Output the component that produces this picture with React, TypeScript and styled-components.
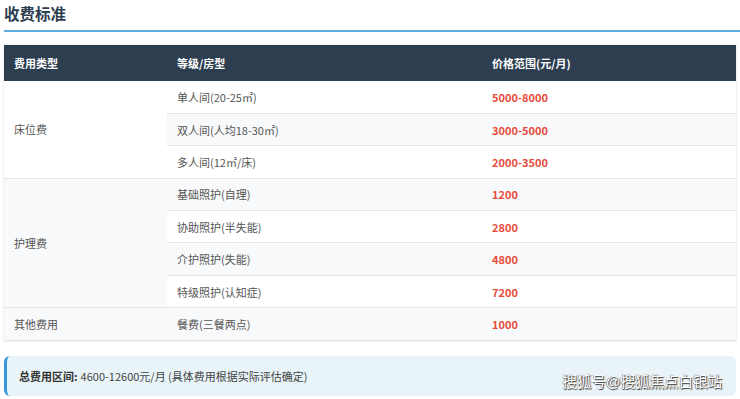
import styled, { createGlobalStyle } from 'styled-components';

const GlobalStyle = createGlobalStyle`
  html, body {
    margin: 0;
    padding: 0;
    background: #ffffff;
  }
  body {
    font-family: "Noto Sans CJK SC", "Noto Sans", sans-serif;
    color: #333333;
  }
`;

const Page = styled.div`
  position: relative;
  width: 740px;
  height: 399px;
  padding: 0 4px;
  box-sizing: border-box;
  overflow: hidden;
`;

const Title = styled.h2`
  margin: 0;
  padding: 3px 0 7px;
  font-size: 15.5px;
  line-height: 20px;
  font-weight: 700;
  color: #2c3e50;
  border-bottom: 2px solid #5dade2;
  margin-right: -4px;
`;

const Table = styled.table`
  width: 732px;
  margin-top: 13px;
  border-collapse: collapse;
  table-layout: fixed;
  font-size: 11px;
  box-shadow: 0 0 2px rgba(0, 0, 0, 0.15);
`;

const HeadCell = styled.th<{ $w: number }>`
  width: ${p => p.$w}px;
  height: 36px;
  padding: 0 10px;
  box-sizing: border-box;
  background: #2c3e50;
  color: #ffffff;
  font-weight: 700;
  text-align: left;
`;

const Row = styled.tr<{ $alt?: boolean }>`
  height: 32.4px;
  background: ${p => (p.$alt ? '#f8f9fa' : '#ffffff')};
`;

const Cell = styled.td<{ $price?: boolean }>`
  padding: 0 10px;
  border-bottom: 1px solid #e6e6e6;
  color: ${p => (p.$price ? '#e74c3c' : '#555555')};
  font-weight: ${p => (p.$price ? 700 : 400)};
  vertical-align: middle;
`;

const Note = styled.div`
  margin-top: 15px;
  height: 40px;
  display: flex;
  align-items: center;
  padding-left: 12px;
  background: #e8f4f8;
  border-left: 3px solid #3498db;
  border-radius: 6px;
  font-size: 11px;
  color: #444444;

  strong {
    color: #333333;
    margin-right: 3px;
  }
`;

const Watermark = styled.div`
  position: absolute;
  right: 18px;
  bottom: 8px;
  font-family: "Liberation Sans", "Noto Sans CJK SC", sans-serif;
  font-size: 14.5px;
  color: #ffffff;
  text-shadow: 1px 1px 1px #333333, -0.5px -0.5px 0.5px #666666;
`;

type Item = { name: string; price: string };
type Group = { type: string; items: Item[] };

const groups: Group[] = [
  {
    type: '床位费',
    items: [
      { name: '单人间(20-25㎡)', price: '5000-8000' },
      { name: '双人间(人均18-30㎡)', price: '3000-5000' },
      { name: '多人间(12㎡/床)', price: '2000-3500' },
    ],
  },
  {
    type: '护理费',
    items: [
      { name: '基础照护(自理)', price: '1200' },
      { name: '协助照护(半失能)', price: '2800' },
      { name: '介护照护(失能)', price: '4800' },
      { name: '特级照护(认知症)', price: '7200' },
    ],
  },
  {
    type: '其他费用',
    items: [{ name: '餐费(三餐两点)', price: '1000' }],
  },
];

export default function App() {
  let index = 0;
  return (
    <Page>
      <GlobalStyle />
      <Title>收费标准</Title>
      <Table>
        <thead>
          <tr>
            <HeadCell $w={163}>费用类型</HeadCell>
            <HeadCell $w={315}>等级/房型</HeadCell>
            <HeadCell $w={254}>价格范围(元/月)</HeadCell>
          </tr>
        </thead>
        <tbody>
          {groups.map(g =>
            g.items.map((it, i) => {
              index += 1;
              return (
                <Row key={it.name} $alt={index % 2 === 0}>
                  {i === 0 && <Cell rowSpan={g.items.length}>{g.type}</Cell>}
                  <Cell>{it.name}</Cell>
                  <Cell $price>{it.price}</Cell>
                </Row>
              );
            })
          )}
        </tbody>
      </Table>
      <Note>
        <strong>总费用区间:</strong> 4600-12600元/月 (具体费用根据实际评估确定)
      </Note>
      <Watermark>搜狐号@搜狐焦点白银站</Watermark>
    </Page>
  );
}
